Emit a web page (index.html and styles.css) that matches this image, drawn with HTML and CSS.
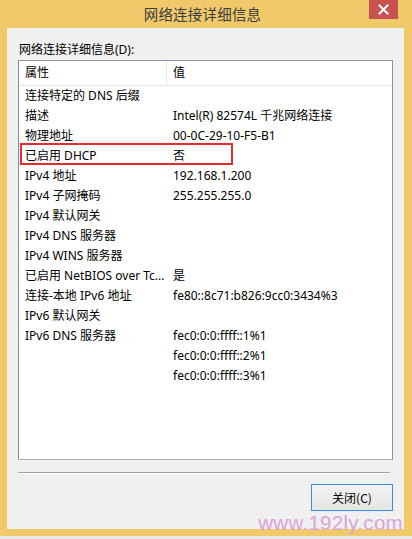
FILE: index.html
```html
<!DOCTYPE html>
<html lang="zh-CN">
<head>
<meta charset="utf-8">
<title>网络连接详细信息</title>
<link rel="stylesheet" href="styles.css">
</head>
<body>
<div class="window">
  <div class="titlebar">
    <span></span>
    <span class="title">网络连接详细信息</span>
    <button class="close" aria-label="关闭">
      <svg width="11" height="11" viewBox="0 0 11 11"><path d="M1.5 1.5 L9.5 9.5 M9.5 1.5 L1.5 9.5" stroke="#fff" stroke-width="2" stroke-linecap="square"/></svg>
    </button>
  </div>
  <div class="client">
    <div class="label">网络连接详细信息(D):</div>
    <div class="listview">
      <div class="header">
        <div class="hcell">属性</div>
        <div class="hcell">值</div>
      </div>
      <div class="rows">
        <div class="row"><span>连接特定的 DNS 后缀</span><span></span></div>
        <div class="row"><span>描述</span><span>Intel(R) 82574L 千兆网络连接</span></div>
        <div class="row"><span>物理地址</span><span>00-0C-29-10-F5-B1</span></div>
        <div class="row"><span>已启用 DHCP</span><span>否</span></div>
        <div class="row"><span>IPv4 地址</span><span>192.168.1.200</span></div>
        <div class="row"><span>IPv4 子网掩码</span><span>255.255.255.0</span></div>
        <div class="row"><span>IPv4 默认网关</span><span></span></div>
        <div class="row"><span>IPv4 DNS 服务器</span><span></span></div>
        <div class="row"><span>IPv4 WINS 服务器</span><span></span></div>
        <div class="row"><span>已启用 NetBIOS over Tc...</span><span>是</span></div>
        <div class="row"><span>连接-本地 IPv6 地址</span><span>fe80::8c71:b826:9cc0:3434%3</span></div>
        <div class="row"><span>IPv6 默认网关</span><span></span></div>
        <div class="row"><span>IPv6 DNS 服务器</span><span>fec0:0:0:ffff::1%1</span></div>
        <div class="row"><span></span><span>fec0:0:0:ffff::2%1</span></div>
        <div class="row"><span></span><span>fec0:0:0:ffff::3%1</span></div>
      </div>
      <div class="mark"></div>
    </div>
    <div class="separator"></div>
    <div class="actions">
      <button class="btn">关闭(C)</button>
    </div>
  </div>
  <div class="watermark">www.192ly.com</div>
</div>
</body>
</html>
```
FILE: styles.css
```css
* { box-sizing: border-box; }

html, body {
  margin: 0;
  padding: 0;
}

body {
  background: #e8e8e8;
  font-family: "Noto Sans", "Noto Sans CJK SC", sans-serif;
  font-size: 12px;
  color: #000;
  width: 412px;
  height: 539px;
  overflow: hidden;
}

.window {
  position: relative;
  width: 412px;
  height: 536px;
  background: #f0c96b;
  padding: 0 8px 7px 7px;
  display: flex;
  flex-direction: column;
}

/* title bar */
.titlebar {
  height: 29px;
  display: grid;
  grid-template-columns: 1fr auto 1fr;
  align-items: start;
  margin: 0 -1px 0 -7px;
}

.title {
  font-family: "Noto Sans CJK SC", sans-serif;
  font-size: 14.5px;
  line-height: 28px;
  color: #3c3c3c;
  letter-spacing: 0.2px;
}

.close {
  justify-self: end;
  width: 29px;
  height: 19px;
  margin-right: 7px;
  border: 0;
  padding: 0;
  background: #c9514f;
  display: flex;
  align-items: center;
  justify-content: center;
}

/* dialog body */
.client {
  flex: 1;
  background: #f0f0f0;
  border: 1px solid #f6f3ea;
  padding: 0 10px 17px 10px;
  display: flex;
  flex-direction: column;
}

.label {
  height: 31px;
  padding-top: 12px;
  line-height: 18px;
  padding-left: 1px;
}

.listview {
  position: relative;
  height: 400px;
  background: #fff;
  border: 1px solid #8a8f98;
  border-bottom-color: #b4b4b4;
}

.header {
  display: grid;
  grid-template-columns: 148px 1fr;
  height: 25px;
  border-bottom: 1px solid #e3e8ee;
}

.hcell {
  padding-left: 6px;
  line-height: 24px;
}

.hcell:first-child {
  border-right: 1px solid #e3e8ee;
}

.row {
  display: grid;
  grid-template-columns: 148px 1fr;
  height: 20px;
  line-height: 20px;
}

.row span {
  padding-left: 6px;
  white-space: nowrap;
}

/* highlight around the DHCP row */
.mark {
  position: absolute;
  left: 1px;
  top: 82px;
  width: 213px;
  height: 22px;
  border: 2px solid #e62b30;
}

.separator {
  margin: 12px 3px 0 0;
  height: 2px;
  border-top: 1px solid #a0a0a0;
  border-bottom: 1px solid #fff;
}

.actions {
  display: flex;
  justify-content: flex-end;
  padding-top: 10px;
}

.btn {
  width: 82px;
  height: 27px;
  font-family: "Noto Sans CJK SC", sans-serif;
  font-size: 12px;
  color: #000;
  background: linear-gradient(#f2f2f2, #e6e6e6);
  border: 1px solid #3d8ee6;
  border-radius: 0;
  padding: 0;
}

.watermark {
  position: absolute;
  right: 9px;
  bottom: 3px;
  font-family: "Liberation Sans", Arial, sans-serif;
  font-size: 20.5px;
  line-height: 20px;
  color: #d9a3da;
  letter-spacing: 0.3px;
}
```
